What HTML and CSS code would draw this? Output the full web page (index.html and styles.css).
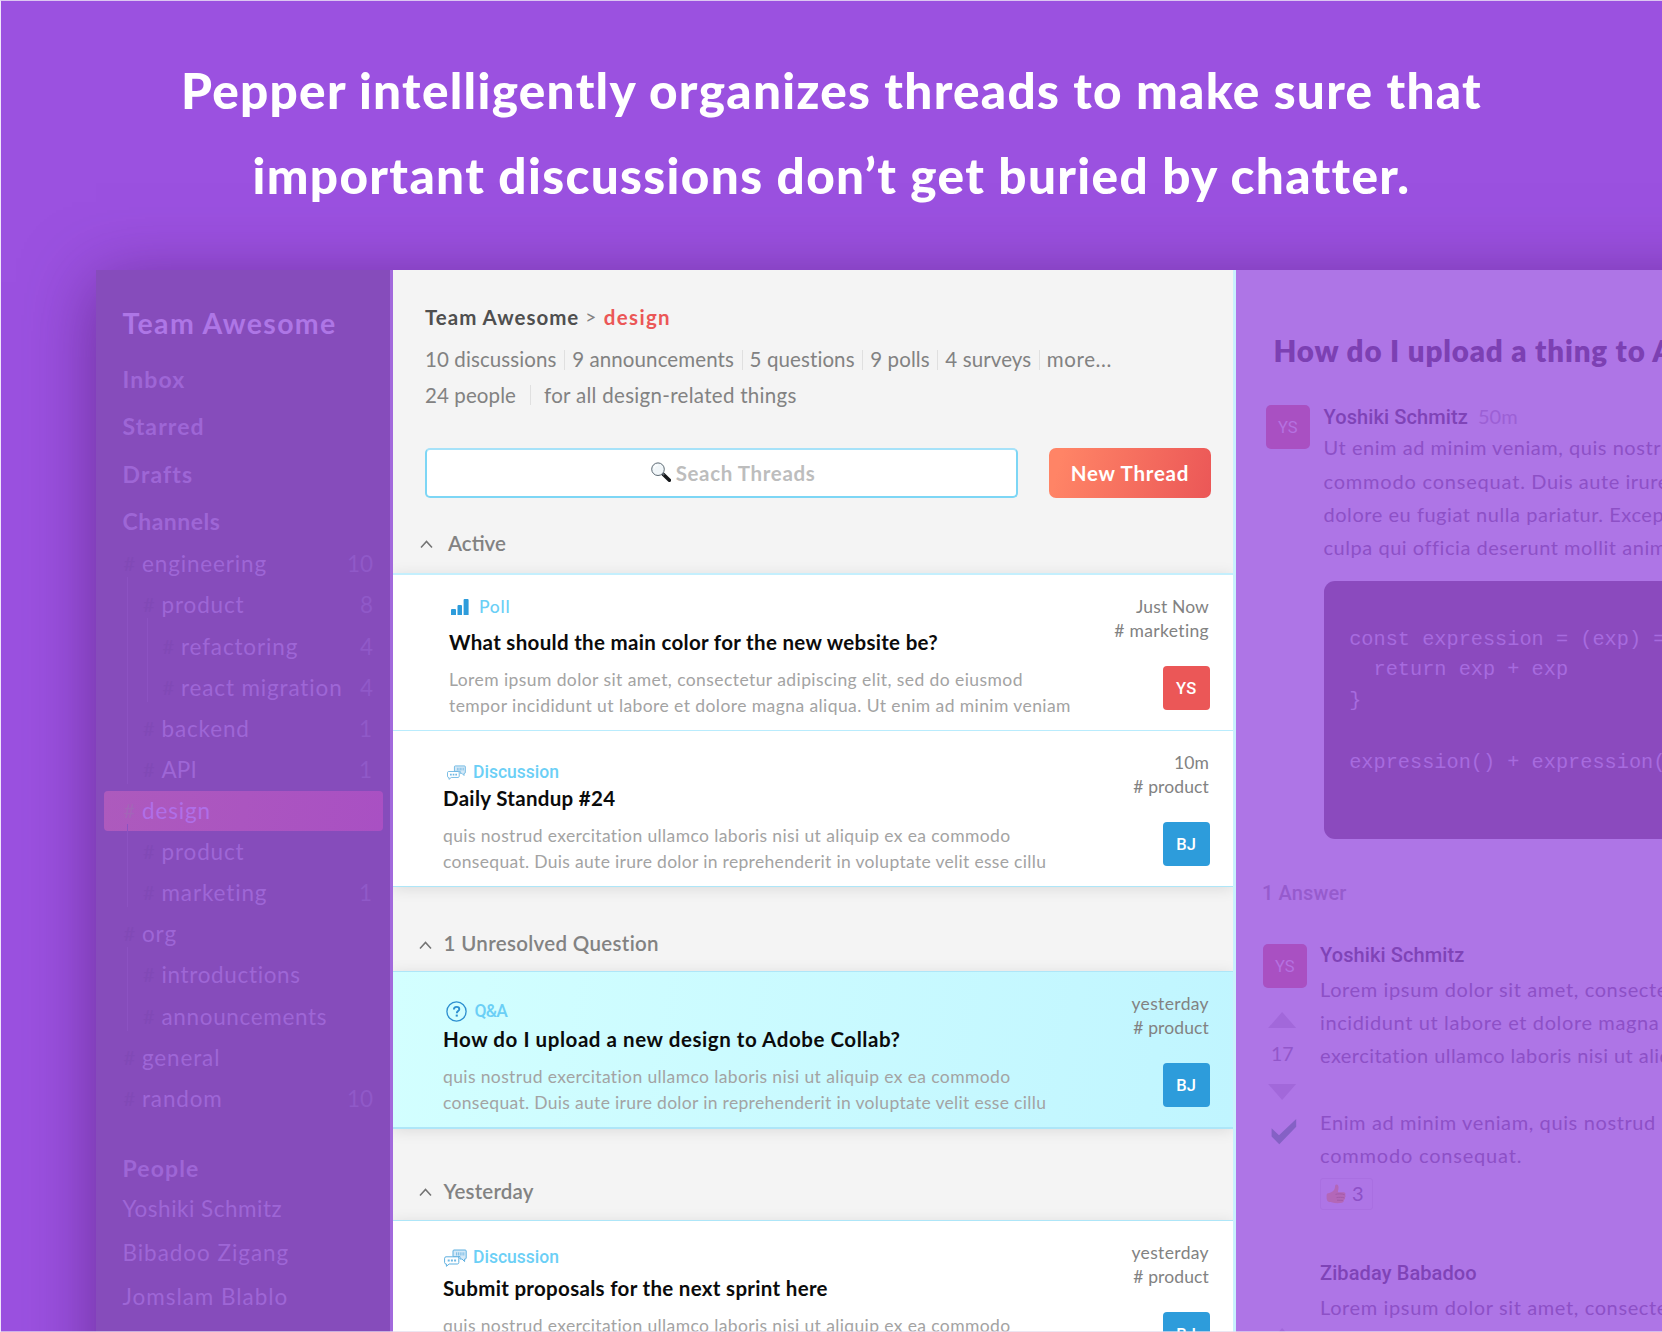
FILE: index.html
```html
<!DOCTYPE html>
<html lang="en">
<head>
<meta charset="utf-8">
<title>Pepper</title>
<link rel="stylesheet" href="styles.css">
</head>
<body>
<svg width="0" height="0" class="defs" aria-hidden="true">
  <symbol id="chevron" viewBox="0 0 13 9"><path d="M1 7.600 6.500 1.400 12 7.600" fill="none" stroke="#737373" stroke-width="1.500"/></symbol>
  <symbol id="chat" viewBox="0 0 23 18">
    <path d="M10 1h11.200c.6 0 1 .4 1 1v7c0 .6-.4 1-1 1h-.6v2.600L18 10h-2V7.600H9V2c0-.6.4-1 1-1z" fill="#d5e9f7" stroke="#5fb0e0" stroke-width="1"/>
    <path d="M12.600 3.300v3.200M14.400 3.300v3.200M16.200 3.300v3.200M18 3.300v3.200M19.800 3.300v3.200" stroke="#7dbde5" stroke-width="1"/>
    <path d="M2 7.800h11.400c.8 0 1.400.6 1.400 1.400v4.400c0 .8-.6 1.400-1.400 1.400H5.200L2.400 17.300V15H2c-.8 0-1.400-.6-1.400-1.400V9.200c0-.8.6-1.400 1.400-1.400z" fill="#fff" stroke="#5fb0e0" stroke-width="1"/>
    <path d="M3.700 10.600h2v2h-2zM6.900 10.600h2v2h-2zM10.100 10.600h2v2h-2z" fill="#6fb8e4"/>
  </symbol>
</svg>
<div class="page">
  <h1 class="headline">Pepper intelligently organizes threads to make sure that<br><span class="headline-second">important discussions don’t get buried by chatter.</span></h1>
  <div class="window">
    <nav class="sidebar">
      <div class="team">Team Awesome</div>
      <ul class="links">
        <li>Inbox</li>
        <li>Starred</li>
        <li>Drafts</li>
        <li class="tight">Channels</li>
      </ul>
      <ul class="tree">
        <li><div class="row"><i>#</i><span>engineering</span><b>10</b></div>
          <ul>
            <li><div class="row"><i>#</i><span>product</span><b>8</b></div>
              <ul>
                <li><div class="row"><i>#</i><span>refactoring</span><b>4</b></div></li>
                <li><div class="row"><i>#</i><span>react migration</span><b>4</b></div></li>
              </ul>
            </li>
            <li><div class="row"><i>#</i><span>backend</span><b class="one">1</b></div></li>
            <li><div class="row"><i>#</i><span class="api">API</span><b class="one">1</b></div></li>
          </ul>
        </li>
        <li><div class="row selected"><i>#</i><span>design</span></div>
          <ul>
            <li><div class="row"><i>#</i><span>product</span></div></li>
            <li><div class="row"><i>#</i><span>marketing</span><b class="one">1</b></div></li>
          </ul>
        </li>
        <li><div class="row"><i>#</i><span>org</span></div>
          <ul>
            <li><div class="row"><i>#</i><span class="long">introductions</span></div></li>
            <li><div class="row"><i>#</i><span class="long">announcements</span></div></li>
          </ul>
        </li>
        <li><div class="row"><i>#</i><span>general</span></div></li>
        <li><div class="row"><i>#</i><span>random</span><b>10</b></div></li>
      </ul>
      <div class="people-title">People</div>
      <ul class="people">
        <li class="first">Yoshiki Schmitz</li>
        <li>Bibadoo Zigang</li>
        <li>Jomslam Blablo</li>
      </ul>
    </nav>

    <main class="threads">
      <header class="channel">
        <div class="crumbs"><strong>Team Awesome</strong><span class="sep">&gt;</span><em>design</em></div>
        <div class="stats"><span>10 discussions</span><span>9 announcements</span><span>5 questions</span><span>9 polls</span><span>4 surveys</span><span class="more">more...</span></div>
        <div class="stats about"><span>24 people</span><span class="purpose">for all design-related things</span></div>
        <div class="tools">
          <div class="search">
            <svg class="lens" viewBox="0 0 20 20">
              <path d="M12.200 12.200 18.400 18.200" stroke="#16181b" stroke-width="3.600" stroke-linecap="round"/>
              <path d="M11.200 11 13.200 13" stroke="#5d666d" stroke-width="1.800"/>
              <circle cx="7" cy="7.200" r="6.300" fill="#f1f6f9" stroke="#5c6973" stroke-width="1"/>
              <path d="M3 6.600A4.300 4.300 0 0 1 7 3" fill="none" stroke="#fff" stroke-width="1.200"/>
            </svg>
            <span>Seach Threads</span>
          </div>
          <div class="new-thread">New Thread</div>
        </div>
      </header>

      <h2 class="section active"><svg><use href="#chevron"/></svg><span>Active</span></h2>
      <div class="group thick">
        <article class="card wide">
          <div class="main">
            <div class="kind poll">
              <svg viewBox="0 0 18 16"><path d="M0 11a1 1 0 0 1 1-1h3a1 1 0 0 1 1 1v5H0zM6.500 7a1 1 0 0 1 1-1h2.500a1 1 0 0 1 1 1v9H6.500zM12.600 1a1 1 0 0 1 1-1h3a1 1 0 0 1 1 1v15h-5z" fill="#2d9cdb"/></svg>
              <span>Poll</span>
            </div>
            <h3>What should the main color for the new website be?</h3>
            <p>Lorem ipsum dolor sit amet, consectetur adipiscing elit, sed do eiusmod<br>tempor incididunt ut labore et dolore magna aliqua. Ut enim ad minim veniam</p>
          </div>
          <div class="meta"><span>Just Now</span><span class="spaced"># marketing</span><div class="avatar red">YS</div></div>
        </article>
        <article class="card">
          <div class="main">
            <div class="kind talk"><svg><use href="#chat"/></svg><span>Discussion</span></div>
            <h3>Daily Standup #24</h3>
            <p class="quis">quis nostrud exercitation ullamco laboris nisi ut aliquip ex ea commodo<br><span>consequat. Duis aute irure dolor in reprehenderit in voluptate velit esse cillu</span></p>
          </div>
          <div class="meta"><span>10m</span><span># product</span><div class="avatar">BJ</div></div>
        </article>
      </div>

      <h2 class="section unresolved"><svg><use href="#chevron"/></svg><span>1 Unresolved Question</span></h2>
      <div class="group highlighted">
        <article class="card">
          <div class="main">
            <div class="kind qa">
              <svg viewBox="0 0 21 21"><circle cx="10.500" cy="10.500" r="9.600" fill="none" stroke="#2d8fd0" stroke-width="1.300"/><path d="M7.900 8.500c0-1.700 1.100-2.600 2.700-2.600 1.500 0 2.700.9 2.700 2.300 0 1.900-2.500 1.900-2.500 4" fill="none" stroke="#2d8fd0" stroke-width="1.900"/><path d="M9.700 13.600h2.100v2H9.700z" fill="#2d8fd0"/></svg>
              <span>Q&amp;A</span>
            </div>
            <h3 class="loose">How do I upload a new design to Adobe Collab?</h3>
            <p class="quis">quis nostrud exercitation ullamco laboris nisi ut aliquip ex ea commodo<br><span>consequat. Duis aute irure dolor in reprehenderit in voluptate velit esse cillu</span></p>
          </div>
          <div class="meta"><span class="spaced">yesterday</span><span># product</span><div class="avatar">BJ</div></div>
        </article>
      </div>

      <h2 class="section yesterday"><svg><use href="#chevron"/></svg><span>Yesterday</span></h2>
      <div class="group">
        <article class="card">
          <div class="main">
            <div class="kind talk large"><svg><use href="#chat"/></svg><span>Discussion</span></div>
            <h3>Submit proposals for the next sprint here</h3>
            <p class="quis">quis nostrud exercitation ullamco laboris nisi ut aliquip ex ea commodo</p>
          </div>
          <div class="meta"><span class="spaced">yesterday</span><span># product</span><div class="avatar">BJ</div></div>
        </article>
      </div>
    </main>

    <aside class="detail">
      <h2 class="question">How do I upload a thing to Adobe Collab?</h2>
      <article class="post">
        <div class="side"><div class="badge">YS</div></div>
        <div class="content">
          <div class="author">Yoshiki Schmitz <time>50m</time></div>
          <p>Ut enim ad minim veniam, quis nostrud exercitation ullamco<br><span class="loose">commodo consequat.</span> Duis aute irure dolor in<br>dolore eu fugiat nulla pariatur. Excepteur sint<br>culpa qui officia deserunt mollit anim id est</p>
          <pre>const expression = (exp) =&gt; {
  return exp + exp
}

expression() + expression()</pre>
        </div>
      </article>
      <div class="answers">1 Answer</div>
      <article class="post reply">
        <div class="side">
          <div class="badge">YS</div>
          <svg class="up" viewBox="0 0 28 16"><path d="M14 0 28 16H0z"/></svg>
          <div class="votes">17</div>
          <svg class="down" viewBox="0 0 28 16"><path d="M14 16 28 0H0z"/></svg>
          <svg class="check" viewBox="0 0 26 26"><path d="M.6 9.300 8 16.200 25.200 0v7.800L8.300 25.300.6 17.500z"/></svg>
        </div>
        <div class="content">
          <div class="author">Yoshiki Schmitz</div>
          <p>Lorem ipsum dolor sit amet, consectetur adipiscing<br>incididunt ut labore et dolore magna aliqua<br><span class="close">exercitation ullamco laboris nisi ut aliquip ex</span><br><br>Enim ad minim veniam, quis nostrud exercitation<br><span class="loose">commodo consequat.</span></p>
          <div class="reaction">
            <svg viewBox="0 0 20 20"><path d="M.6 11.200C.6 9.700 1.800 9.200 3.200 9c2.700-.5 5.300-2.400 5.700-5.200C9.100 2 9.100.6 10.500.5c2 0 2.300 2.600 1.900 4.600-.2 1.300-.6 2.300-.4 2.900.6.5 3.700-.1 6 .3 1.500.3 1.800 1.600 1.200 2.600.6 1 .4 2-.3 2.700.4 1-.1 2-1 2.500.2 1.300-.6 2.400-2 2.700-3.300.7-6.900.6-9.400-.3-1.300-.5-2.600-.3-4-.8C.5 17 .6 13.600.6 11.200z" fill="#b367b8"/><path d="M9.500 10.400c2-.7 6.500-.9 9.200.4M10.500 13.600c2.300-.4 5.500-.4 7.800.2M11 16.200c2 .1 4.400.1 6 .2" stroke="#a35aa9" fill="none"/></svg>
            <span>3</span>
          </div>
        </div>
      </article>
      <article class="post reply last">
        <div class="side"><svg class="up" viewBox="0 0 28 16"><path d="M14 0 28 16H0z"/></svg></div>
        <div class="content">
          <div class="author">Zibaday Babadoo</div>
          <p>Lorem ipsum dolor sit amet, consectetur adipiscing</p>
        </div>
      </article>
    </aside>
  </div>
</div>
</body>
</html>
```
FILE: styles.css
```css
* { box-sizing: border-box; }
body { margin: 0; font-family: Lato, "Liberation Sans", sans-serif; }
ul { margin: 0; padding: 0; list-style: none; }
h1, h2, h3, p, pre { margin: 0; font-weight: inherit; }
.defs { display: block; position: absolute; }

.page {
  position: relative;
  width: 1662px;
  height: 1332px;
  overflow: hidden;
  background: #9b51e0;
  border-top: 1px solid #dcc7f1;
  border-left: 1px solid #f0e4fb;
}
.page::after {
  content: "";
  position: absolute;
  inset: auto 0 0;
  height: 1px;
  background: rgba(228, 220, 236, .7);
}
.headline {
  height: 269px;
  padding-top: 47px;
  text-align: center;
  color: #fff;
  font-size: 49.500px;
  line-height: 84.700px;
  font-weight: 900;
  letter-spacing: 1.300px;
  white-space: nowrap;
}
.headline-second { letter-spacing: 1.350px; }

.window {
  display: flex;
  width: 1800px;
  height: 1200px;
  margin-left: 95px;
  white-space: nowrap;
  box-shadow: 0 12px 66px rgba(70, 20, 95, .55);
}

/* Sidebar */
.sidebar {
  width: 297px;
  flex: none;
  padding: 35px 7px 0 8px;
  background: #864cbb;
  border-right: 3px solid #a269dc;
  color: #9e66d6;
  overflow: hidden;
}
.team { padding-left: 18.500px; font-size: 28.500px; line-height: 36px; font-weight: 700; letter-spacing: 1.350px; color: #ae76e6; }
.links { padding: 15.200px 0 0 18.500px; font-size: 23px; line-height: 47.300px; font-weight: 700; letter-spacing: 1.100px; }
.tight { letter-spacing: .5px; }
.tree { margin-top: -2px; font-size: 22.500px; line-height: 41.120px; letter-spacing: .85px; }
.tree li { position: relative; }
.tree ul .row { padding-left: 39px; }
.tree ul ul .row { padding-left: 58.500px; }
.tree ul::before {
  content: "";
  position: absolute;
  left: 23px;
  top: 34px;
  bottom: 6px;
  width: 1px;
  background: #8c52c2;
}
.tree ul ul::before { left: 43px; }
.row { position: relative; display: flex; height: 41.120px; padding: 0 10px 0 19.500px; }
.row i { width: 18.500px; flex: none; font-style: normal; font-size: 20px; color: #8149b6; }
.row b { margin-left: auto; font-weight: 400; color: #9059c8; letter-spacing: 0; }
.row b.one { margin-right: 1px; }
.api { letter-spacing: .1px; }
.long { letter-spacing: .65px; }
.selected { color: #b06fe8; }
.selected::before {
  content: "";
  position: absolute;
  inset: 1.200px 0 .6px 0;
  border-radius: 4px;
  background: linear-gradient(100deg, #ad5abd, #a950c3);
}
.selected i, .selected span { position: relative; }
.selected i { color: #a465b8; }
.people-title { margin-top: 29px; padding-left: 18.500px; font-size: 23px; line-height: 40px; font-weight: 700; letter-spacing: 1.100px; }
.people { margin-top: -1px; padding-left: 18.500px; font-size: 22.500px; line-height: 43.800px; letter-spacing: .95px; }
.people .first { letter-spacing: .5px; }

/* Thread list */
.threads {
  width: 843px;
  flex: none;
  background: #f4f4f4;
  border-right: 3px solid #c9f1fd;
  overflow: hidden;
  color: #828282;
}
.channel { padding: 33px 22px 0 32px; font-size: 20.500px; }
.crumbs { display: flex; line-height: 28px; }
.crumbs strong { font-weight: 700; letter-spacing: .99px; color: #4f4f4f; }
.sep { width: 11px; margin: 0 7.500px 0 6px; font-size: 19px; }
.crumbs em { font-style: normal; font-weight: 700; letter-spacing: 1.340px; color: #eb5757; }
.stats { display: flex; line-height: 35.300px; margin-top: 11.300px; letter-spacing: .1px; }
.stats span { display: flex; align-items: center; }
.stats span + span::before { content: ""; width: 1px; height: 20px; margin: 0 7px 0 7.600px; background: #e0e0e0; }
.stats .more { letter-spacing: .6px; }
.about { margin-top: 0; }
.stats .purpose { letter-spacing: .3px; }
.about span + span::before { margin: 0 13px 0 14px; }
.tools { display: flex; justify-content: space-between; margin-top: 34.800px; }
.search {
  display: flex;
  align-items: center;
  justify-content: center;
  gap: 5px;
  width: 593px;
  height: 50px;
  padding-left: 23px;
  background: #fff;
  border: 2px solid #7dd6f5;
  border-top-color: #a6e2f9;
  border-radius: 5px;
  color: #bdbdbd;
  font-weight: 700;
  letter-spacing: .64px;
}
.lens { width: 20px; height: 20px; margin-top: -2px; }
.new-thread {
  width: 162px;
  height: 50px;
  border-radius: 7px;
  background: linear-gradient(105deg, #ff8466 8%, #eb5757);
  color: #fff;
  font-weight: 700;
  line-height: 51px;
  letter-spacing: .77px;
  text-align: center;
}
.section { display: flex; font-size: 20.500px; line-height: 28px; font-weight: 600; }
.section svg { width: 13px; height: 9px; margin: 10px 11.500px 0 26px; }
.active { height: 75.500px; padding-top: 31.500px; }
.active svg { margin: 10.500px 15.500px 0 26.500px; }
.active span { letter-spacing: 0; }
.unresolved { height: 84px; padding-top: 42px; }
.unresolved svg { margin-top: 12px; }
.unresolved span { letter-spacing: .33px; }
.yesterday { height: 91px; padding-top: 47.400px; }
.yesterday svg { margin-top: 11px; }
.yesterday span { letter-spacing: .2px; }
.group { background: #fff; border-top: 1px solid #aee6f8; border-bottom: 1px solid #aee6f8; box-shadow: 0 2px 14px rgba(0, 0, 0, .1); }
.thick { border-top: 2px solid #c4effd; }
.highlighted { background: linear-gradient(100deg, #d3ffff, #c0f5ff); border-bottom-width: 2px; }
.card { display: flex; justify-content: space-between; height: 155px; padding: 0 23px 0 50px; }
.card.wide { padding-left: 56px; }
.card + .card { height: 156px; border-top: 1px solid #b9ecfd; }
.kind { display: flex; align-items: flex-end; height: 53.600px; font: 500 17.500px/20px Roboto, sans-serif; color: #6bcff6; }
.kind svg { flex: none; }
.poll { padding: 0 0 11.700px 2px; font-family: Lato, sans-serif; letter-spacing: .7px; }
.poll svg { width: 18px; height: 16px; margin: 0 10px 2px 0; }
.talk { padding: 0 0 3px 4px; }
.talk svg { width: 19px; height: 15px; margin: 0 7px 2px 0; }
.large { padding: 0 0 7.600px 1px; }
.large svg { width: 23px; height: 18px; margin: 0 6px 0 0; }
.qa { padding: 0 0 4.500px 3px; letter-spacing: -.8px; }
.qa svg { width: 21px; height: 21px; margin: 0 7.500px -.5px 0; }
.card h3 { font-size: 20.500px; line-height: 26px; font-weight: 700; letter-spacing: .31px; color: #0b0b0b; }
.card h3.loose { letter-spacing: .56px; }
.card p { margin-top: 12.600px; font-size: 17.500px; line-height: 26px; letter-spacing: .42px; color: #a3a3a3; }
.card p.quis { letter-spacing: .38px; }
.quis span { letter-spacing: .32px; }
.meta { display: flex; flex-direction: column; align-items: flex-end; padding-top: 20px; font-size: 17.500px; line-height: 23.500px; letter-spacing: .13px; }
.meta span { margin-right: 1px; }
.meta .spaced { letter-spacing: .35px; }
.avatar {
  width: 47.500px;
  height: 44px;
  margin-top: 23.600px;
  border-radius: 4px;
  background: #2d9cdb;
  color: #fff;
  font: 500 16.500px/45px Roboto, sans-serif;
  letter-spacing: .2px;
  text-align: center;
}
.red { background: #eb5757; }

/* Thread detail */
.detail { width: 660px; flex: none; padding-top: 63px; background: #ae75e6; overflow: hidden; color: #8d50c6; }
.question { padding-left: 37.500px; font-size: 29.500px; line-height: 36px; font-weight: 800; letter-spacing: .85px; color: #7c40b3; }
.post { display: flex; margin-top: 34.800px; padding-left: 30px; font-size: 20px; line-height: 33.400px; }
.side { width: 43.500px; flex: none; margin-right: 14px; }
.badge {
  height: 44px;
  margin-top: 1.500px;
  border-radius: 5px;
  background: #a950c2;
  color: #b571e0;
  font: 400 16.500px/45px Roboto, sans-serif;
  text-align: center;
}
.author { font: 500 20px/24px Roboto, sans-serif; letter-spacing: .1px; color: #7f43b7; }
.author time { margin-left: 5px; font: 400 20px Lato, sans-serif; color: #9c60d5; }
.content p { margin-top: 2.400px; letter-spacing: .54px; }
.content .loose { letter-spacing: .8px; }
.content .close { letter-spacing: .45px; }
pre {
  width: 420px;
  height: 257.300px;
  margin-top: 16.600px;
  padding: 43.200px 0 0 25.700px;
  border-radius: 11px;
  background: #8b4abe;
  color: #a76bdf;
  font: 20.280px/30.800px "Liberation Mono", monospace;
}
.answers { margin-top: 42.500px; padding-left: 26px; font: 500 20px/24px Roboto, sans-serif; letter-spacing: .13px; color: #965bcd; }
.reply { margin-top: 37.700px; padding-left: 27px; line-height: 33.280px; }
.reply .side { margin-right: 13.500px; }
.reply p { margin-top: 5.800px; letter-spacing: .62px; }
.side svg { display: block; margin-left: 5.300px; fill: #a268da; }
.up, .down { width: 28.300px; height: 16px; }
.up { margin-top: 23.400px; }
.votes { width: 38.500px; margin: 14.500px 0 18.200px; line-height: 24px; font-size: 19.500px; text-align: center; color: #9257ca; }
.side .check { width: 26px; height: 26px; margin: 18.600px 0 0 8px; fill: #8561c5; }
.reaction {
  display: flex;
  align-items: center;
  width: 52.500px;
  height: 32px;
  margin-top: 5.600px;
  padding-left: 5px;
  border: 1px solid #a96fe1;
  border-radius: 3px;
}
.reaction svg { width: 20px; height: 20px; margin-right: 6px; }
.last { margin-top: 50.900px; }
.last .up { margin-top: 67.500px; }
```
